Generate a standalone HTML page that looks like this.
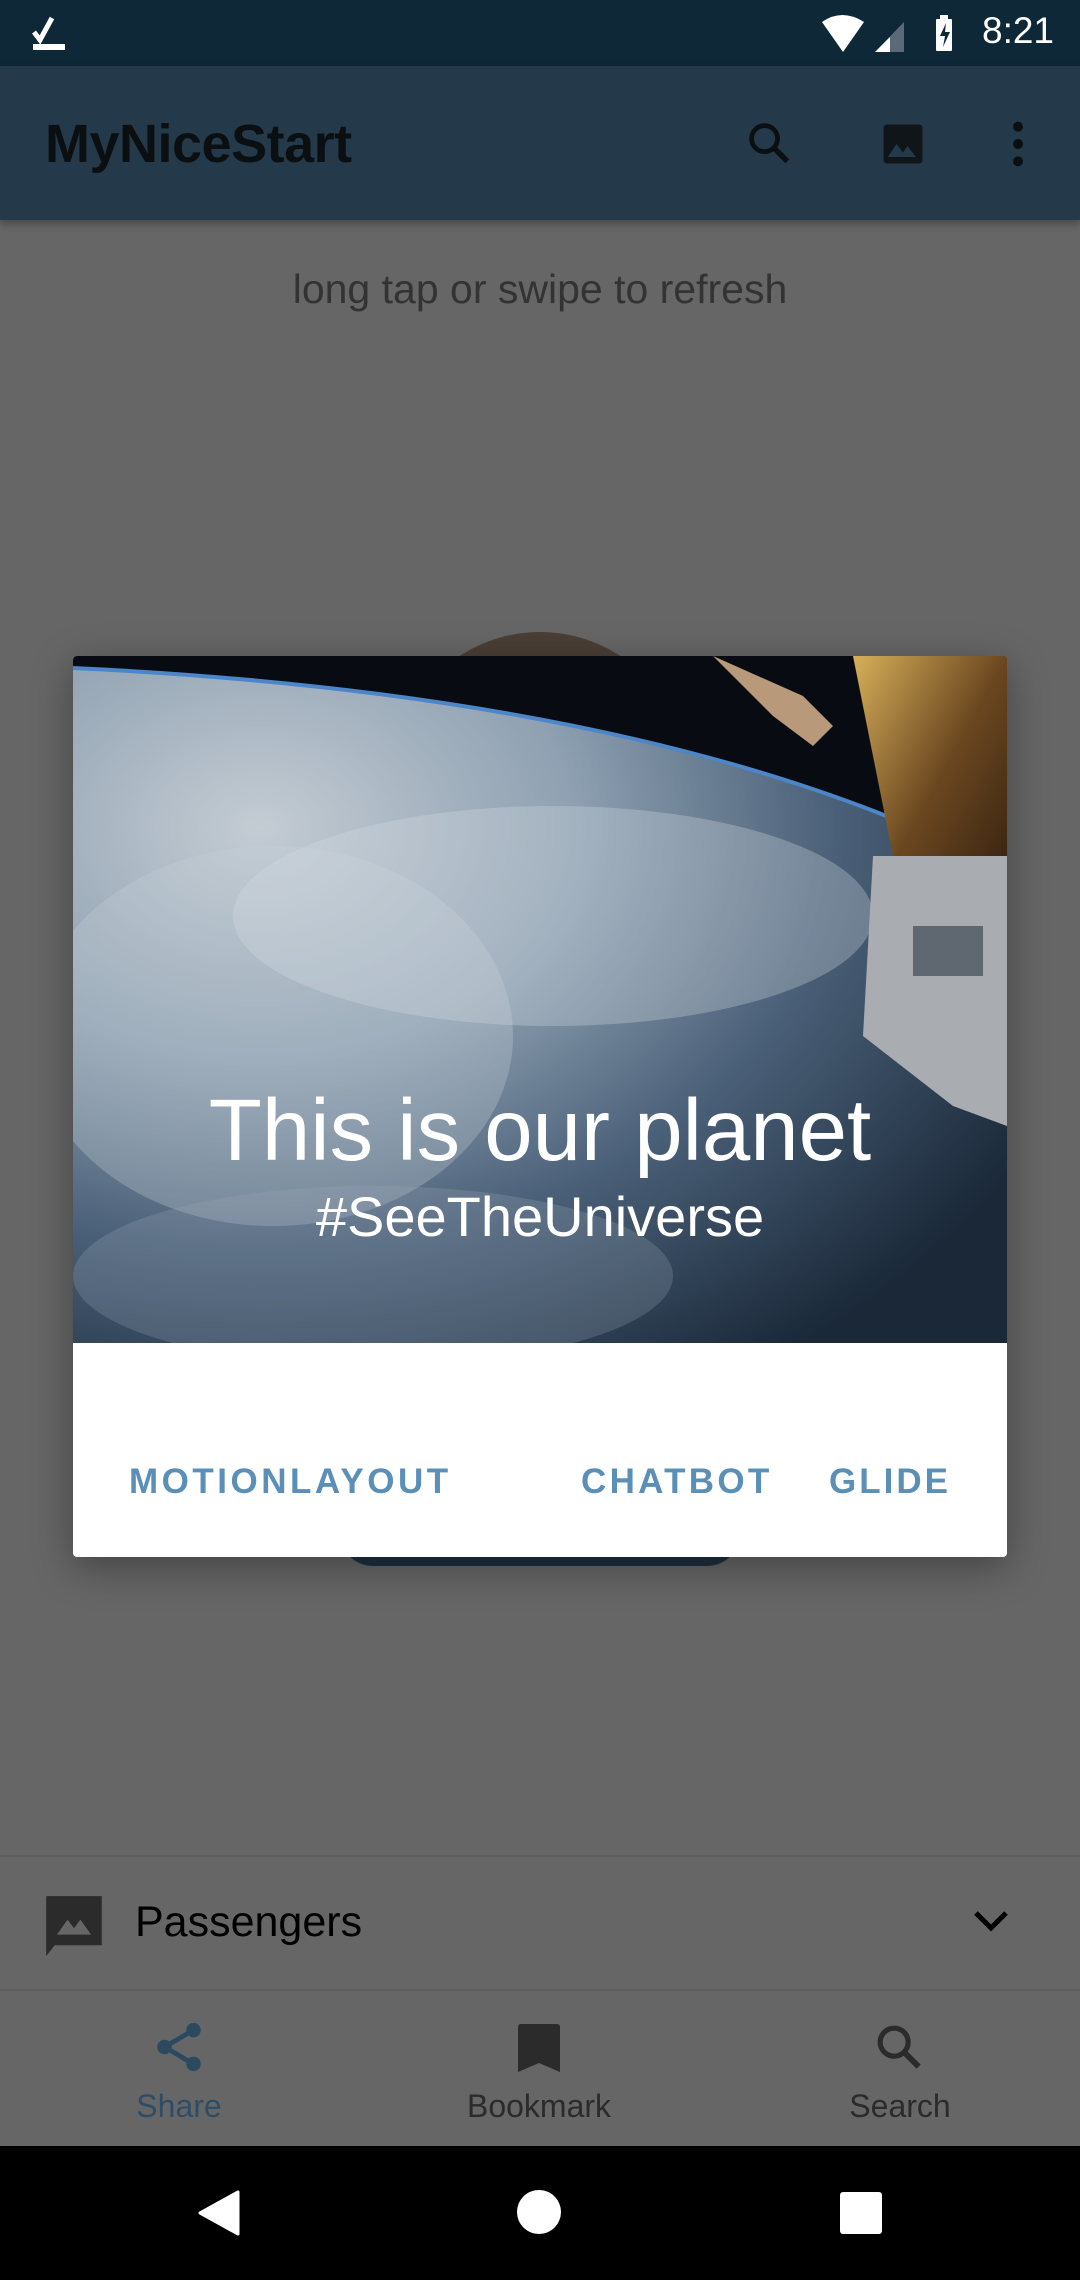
<!DOCTYPE html>
<html><head><meta charset="utf-8"><style>
*{margin:0;padding:0;box-sizing:border-box}
body{width:1080px;height:2280px;background:#666;position:relative;overflow:hidden;font-family:"Liberation Sans",sans-serif}
.abs{position:absolute}
</style></head><body>
<div class="abs" style="left:0;top:0;width:1080px;height:66px;background:#0f2838"></div>
<svg class="abs" style="left:30px;top:14px" width="40" height="40" viewBox="0 0 40 40"><path d="M4 18l6 8L22 4" stroke="#fff" stroke-width="5" fill="none"/><rect x="3" y="30" width="32" height="6" fill="#fff"/></svg>
<svg class="abs" style="left:820px;top:14px" width="150" height="40" viewBox="0 0 150 40"><path d="M2 8Q22 -6 44 8L23 38Z" fill="#fff"/><path d="M55 38L84 8V38Z" fill="#5a6a76"/><path d="M55 38L70 23V38Z" fill="#fff"/><rect x="116" y="5" width="16" height="32" rx="1" fill="#fff"/><rect x="120" y="1" width="8" height="5" fill="#fff"/><path d="M126 9l-6 13h5l-2 11 7-15h-5z" fill="#0f2838"/></svg>
<div class="abs" style="left:982px;top:10px;color:#fff;font-size:37px">8:21</div>
<div class="abs" style="left:0;top:66px;width:1080px;height:154px;background:#243a4b;box-shadow:0 4px 8px rgba(0,0,0,.3)"></div>
<div class="abs" style="left:45px;top:113px;font-size:54px;font-weight:bold;color:#0b0f12;letter-spacing:-0.5px">MyNiceStart</div>
<svg class="abs" style="left:744px;top:118px" width="52" height="52" viewBox="0 0 24 24"><circle cx="9.5" cy="9.5" r="6" stroke="#0b0f12" stroke-width="2.2" fill="none"/><path d="M14 14l6 6" stroke="#0b0f12" stroke-width="2.5"/></svg>
<svg class="abs" style="left:877px;top:118px" width="52" height="52" viewBox="0 0 24 24"><rect x="3" y="3" width="18" height="18" rx="1.5" fill="#0f1518"/><path d="M5 18l4-6 3 4 2-3 4 5z" fill="#243a4b"/></svg>
<svg class="abs" style="left:1004px;top:118px" width="28" height="52" viewBox="0 0 12 24"><circle cx="6" cy="4" r="2.3" fill="#0b0f12"/><circle cx="6" cy="12" r="2.3" fill="#0b0f12"/><circle cx="6" cy="20" r="2.3" fill="#0b0f12"/></svg>
<div class="abs" style="left:0;top:266px;width:1080px;text-align:center;font-size:41px;color:#333">long tap or swipe to refresh</div>
<div class="abs" style="left:393px;top:632px;width:294px;height:294px;border-radius:50%;background:#4a3f36"></div>
<div class="abs" style="left:340px;top:1500px;width:400px;height:66px;border-radius:33px;background:#1f3040"></div>
<div class="abs" style="left:73px;top:656px;width:934px;height:901px;background:#fff;border-radius:4px;overflow:hidden;box-shadow:0 10px 40px rgba(0,0,0,.35)">
<svg width="934" height="687" viewBox="0 0 934 687" style="display:block">
<defs>
<radialGradient id="e" cx="0.2" cy="0.25" r="0.95"><stop offset="0" stop-color="#c4ccd3"/><stop offset="0.35" stop-color="#8fa1b2"/><stop offset="0.65" stop-color="#4a6078"/><stop offset="1" stop-color="#1a2838"/></radialGradient>
<linearGradient id="g" x1="0" y1="0" x2="1" y2="1"><stop offset="0" stop-color="#d7b05a"/><stop offset="0.5" stop-color="#6b4720"/><stop offset="1" stop-color="#2a1a0c"/></linearGradient>
</defs>
<rect width="934" height="687" fill="url(#e)"/>
<ellipse cx="200" cy="380" rx="240" ry="190" fill="#c8d1d8" opacity=".3"/>
<ellipse cx="480" cy="260" rx="320" ry="110" fill="#d6dde4" opacity=".3"/>
<ellipse cx="300" cy="620" rx="300" ry="90" fill="#9aa8b6" opacity=".25"/>
<path d="M0 0H934V215Q600 40 0 12Z" fill="#080c12"/>
<path d="M0 12Q600 40 934 215" stroke="#4a86c8" stroke-width="4" fill="none"/>
<path d="M640 0L730 40 760 70 740 90 700 60Z" fill="#b89a7a"/>
<path d="M780 0H934V280L860 260 820 200Z" fill="url(#g)"/>
<path d="M800 200L934 200V470L880 450 790 380Z" fill="#a9adb2"/>
<rect x="840" y="270" width="70" height="50" fill="#5f6770"/>
</svg>
<div class="abs" style="left:0;top:425px;width:934px;text-align:center;color:#fff;font-size:87px">This is our planet</div>
<div class="abs" style="left:0;top:528px;width:934px;text-align:center;color:#fff;font-size:56px">#SeeTheUniverse</div>
<div class="abs" style="left:56px;top:806px;color:#5a8fb8;font-size:35px;font-weight:bold;letter-spacing:3.5px">MOTIONLAYOUT</div>
<div class="abs" style="left:508px;top:806px;color:#5a8fb8;font-size:35px;font-weight:bold;letter-spacing:3.3px">CHATBOT</div>
<div class="abs" style="left:756px;top:806px;color:#5a8fb8;font-size:35px;font-weight:bold;letter-spacing:3px">GLIDE</div>
</div>
<div class="abs" style="left:0;top:1855px;width:1080px;height:136px;border-top:2px solid #5e5e5e;border-bottom:2px solid #5e5e5e"></div>
<svg class="abs" style="left:44px;top:1894px" width="60" height="62" viewBox="0 0 28 29"><path d="M1 1H27V24H5L1 29Z" fill="#2b2b2b"/><path d="M6 19l5-7 3 4 3-4 5 7z" fill="#666"/></svg>
<div class="abs" style="left:135px;top:1898px;font-size:43px;color:#000">Passengers</div>
<svg class="abs" style="left:972px;top:1908px" width="38" height="26" viewBox="0 0 38 26"><path d="M4 5l15 15L34 5" stroke="#000" stroke-width="5" fill="none"/></svg>
<svg class="abs" style="left:150px;top:2018px" width="58" height="58" viewBox="0 0 24 24"><circle cx="18" cy="5" r="3" fill="#2b4a60"/><circle cx="6" cy="12" r="3" fill="#2b4a60"/><circle cx="18" cy="19" r="3" fill="#2b4a60"/><path d="M18 5L6 12l12 7" stroke="#2b4a60" stroke-width="2" fill="none"/></svg>
<div class="abs" style="left:79px;top:2088px;width:200px;text-align:center;font-size:32px;color:#2d4d66">Share</div>
<svg class="abs" style="left:518px;top:2024px" width="42" height="48" viewBox="0 0 14 16"><path d="M0 1Q0 0 1 0H13Q14 0 14 1V16L7 13 0 16Z" fill="#2b2b2b"/></svg>
<div class="abs" style="left:419px;top:2088px;width:240px;text-align:center;font-size:32px;color:#2b2b2b">Bookmark</div>
<svg class="abs" style="left:872px;top:2020px" width="56" height="56" viewBox="0 0 24 24"><circle cx="9.5" cy="9.5" r="6" stroke="#2b2b2b" stroke-width="2.2" fill="none"/><path d="M14 14l6 6" stroke="#2b2b2b" stroke-width="2.5"/></svg>
<div class="abs" style="left:800px;top:2088px;width:200px;text-align:center;font-size:32px;color:#2b2b2b">Search</div>
<div class="abs" style="left:0;top:2146px;width:1080px;height:134px;background:#000"></div>
<svg class="abs" style="left:198px;top:2190px" width="44" height="46" viewBox="0 0 44 46"><path d="M40 2V44L2 23Z" fill="#fff" stroke="#fff" stroke-linejoin="round" stroke-width="3"/></svg>
<div class="abs" style="left:517px;top:2190px;width:44px;height:44px;border-radius:50%;background:#fff"></div>
<div class="abs" style="left:840px;top:2192px;width:42px;height:42px;border-radius:3px;background:#fff"></div>
</body></html>
